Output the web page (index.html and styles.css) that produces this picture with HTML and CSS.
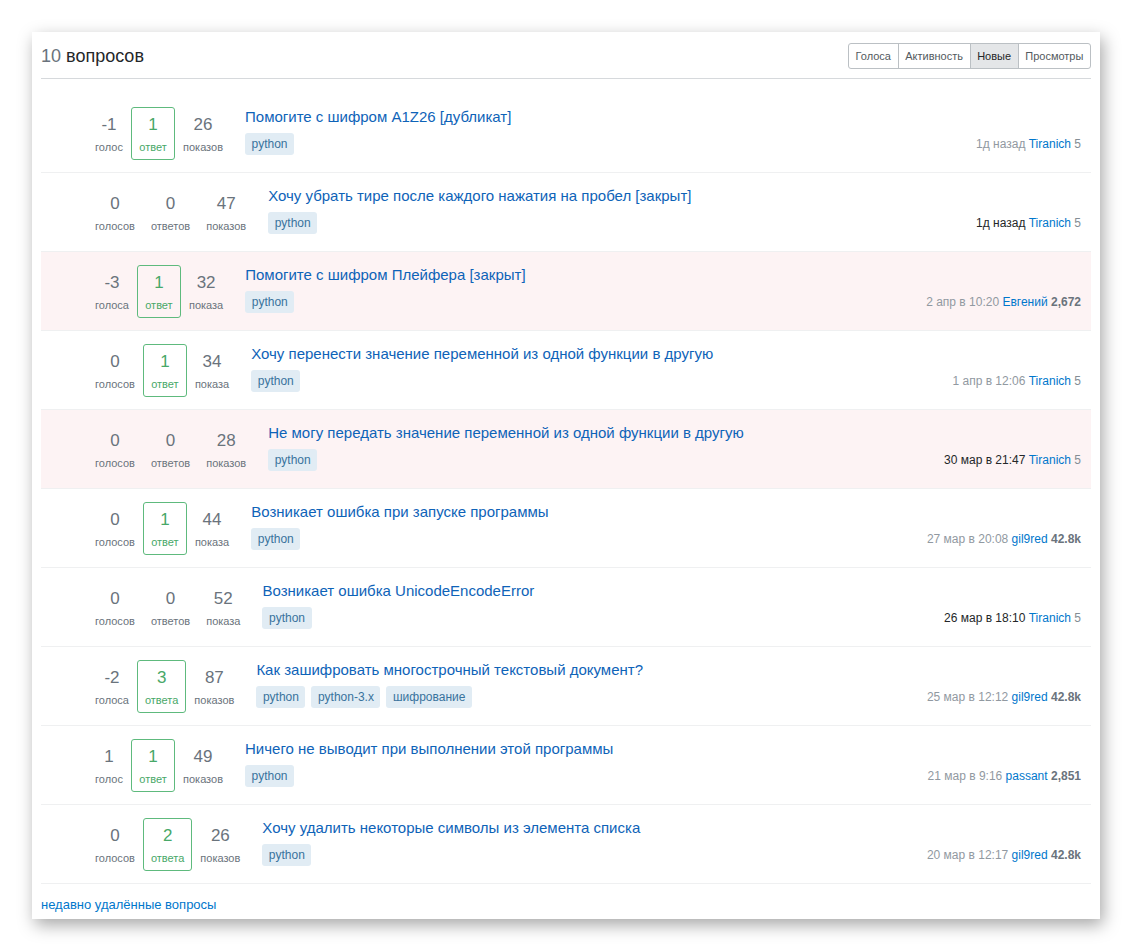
FILE: index.html
```html
<!DOCTYPE html>
<html lang="ru">
<head>
<meta charset="utf-8">
<title>10 вопросов</title>
<link rel="stylesheet" href="styles.css">
</head>
<body>
<div class="card">
  <div class="header">
    <h1 class="heading"><span class="count">10</span> вопросов</h1>
    <div class="tabs">
      <a class="tab">Голоса</a>
      <a class="tab">Активность</a>
      <a class="tab active">Новые</a>
      <a class="tab">Просмотры</a>
    </div>
  </div>

  <div class="list">
    <div class="row">
      <div class="stats">
        <div class="stat"><span class="num">-1</span><span class="lbl">голос</span></div>
        <div class="stat answered"><span class="num">1</span><span class="lbl">ответ</span></div>
        <div class="stat"><span class="num">26</span><span class="lbl">показов</span></div>
      </div>
      <div class="summary">
        <a class="title">Помогите с шифром A1Z26 [дубликат]</a>
        <div class="meta">
          <div class="tags"><a class="tag">python</a></div>
          <div class="started"><span class="when">1д назад</span> <a class="user">Tiranich</a> <span class="rep low">5</span></div>
        </div>
      </div>
    </div>

    <div class="row">
      <div class="stats">
        <div class="stat"><span class="num">0</span><span class="lbl">голосов</span></div>
        <div class="stat"><span class="num">0</span><span class="lbl">ответов</span></div>
        <div class="stat"><span class="num">47</span><span class="lbl">показов</span></div>
      </div>
      <div class="summary">
        <a class="title">Хочу убрать тире после каждого нажатия на пробел [закрыт]</a>
        <div class="meta">
          <div class="tags"><a class="tag">python</a></div>
          <div class="started"><span class="when dark">1д назад</span> <a class="user">Tiranich</a> <span class="rep low">5</span></div>
        </div>
      </div>
    </div>

    <div class="row closed">
      <div class="stats">
        <div class="stat"><span class="num">-3</span><span class="lbl">голоса</span></div>
        <div class="stat answered"><span class="num">1</span><span class="lbl">ответ</span></div>
        <div class="stat"><span class="num">32</span><span class="lbl">показа</span></div>
      </div>
      <div class="summary">
        <a class="title">Помогите с шифром Плейфера [закрыт]</a>
        <div class="meta">
          <div class="tags"><a class="tag">python</a></div>
          <div class="started"><span class="when">2 апр в 10:20</span> <a class="user">Евгений</a> <span class="rep">2,672</span></div>
        </div>
      </div>
    </div>

    <div class="row">
      <div class="stats">
        <div class="stat"><span class="num">0</span><span class="lbl">голосов</span></div>
        <div class="stat answered"><span class="num">1</span><span class="lbl">ответ</span></div>
        <div class="stat"><span class="num">34</span><span class="lbl">показа</span></div>
      </div>
      <div class="summary">
        <a class="title">Хочу перенести значение переменной из одной функции в другую</a>
        <div class="meta">
          <div class="tags"><a class="tag">python</a></div>
          <div class="started"><span class="when">1 апр в 12:06</span> <a class="user">Tiranich</a> <span class="rep low">5</span></div>
        </div>
      </div>
    </div>

    <div class="row closed">
      <div class="stats">
        <div class="stat"><span class="num">0</span><span class="lbl">голосов</span></div>
        <div class="stat"><span class="num">0</span><span class="lbl">ответов</span></div>
        <div class="stat"><span class="num">28</span><span class="lbl">показов</span></div>
      </div>
      <div class="summary">
        <a class="title">Не могу передать значение переменной из одной функции в другую</a>
        <div class="meta">
          <div class="tags"><a class="tag">python</a></div>
          <div class="started"><span class="when dark">30 мар в 21:47</span> <a class="user">Tiranich</a> <span class="rep low">5</span></div>
        </div>
      </div>
    </div>

    <div class="row">
      <div class="stats">
        <div class="stat"><span class="num">0</span><span class="lbl">голосов</span></div>
        <div class="stat answered"><span class="num">1</span><span class="lbl">ответ</span></div>
        <div class="stat"><span class="num">44</span><span class="lbl">показа</span></div>
      </div>
      <div class="summary">
        <a class="title">Возникает ошибка при запуске программы</a>
        <div class="meta">
          <div class="tags"><a class="tag">python</a></div>
          <div class="started"><span class="when">27 мар в 20:08</span> <a class="user">gil9red</a> <span class="rep">42.8k</span></div>
        </div>
      </div>
    </div>

    <div class="row">
      <div class="stats">
        <div class="stat"><span class="num">0</span><span class="lbl">голосов</span></div>
        <div class="stat"><span class="num">0</span><span class="lbl">ответов</span></div>
        <div class="stat"><span class="num">52</span><span class="lbl">показа</span></div>
      </div>
      <div class="summary">
        <a class="title">Возникает ошибка UnicodeEncodeError</a>
        <div class="meta">
          <div class="tags"><a class="tag">python</a></div>
          <div class="started"><span class="when dark">26 мар в 18:10</span> <a class="user">Tiranich</a> <span class="rep low">5</span></div>
        </div>
      </div>
    </div>

    <div class="row">
      <div class="stats">
        <div class="stat"><span class="num">-2</span><span class="lbl">голоса</span></div>
        <div class="stat answered"><span class="num">3</span><span class="lbl">ответа</span></div>
        <div class="stat"><span class="num">87</span><span class="lbl">показов</span></div>
      </div>
      <div class="summary">
        <a class="title">Как зашифровать многострочный текстовый документ?</a>
        <div class="meta">
          <div class="tags"><a class="tag">python</a><a class="tag">python-3.x</a><a class="tag">шифрование</a></div>
          <div class="started"><span class="when">25 мар в 12:12</span> <a class="user">gil9red</a> <span class="rep">42.8k</span></div>
        </div>
      </div>
    </div>

    <div class="row">
      <div class="stats">
        <div class="stat"><span class="num">1</span><span class="lbl">голос</span></div>
        <div class="stat answered"><span class="num">1</span><span class="lbl">ответ</span></div>
        <div class="stat"><span class="num">49</span><span class="lbl">показов</span></div>
      </div>
      <div class="summary">
        <a class="title">Ничего не выводит при выполнении этой программы</a>
        <div class="meta">
          <div class="tags"><a class="tag">python</a></div>
          <div class="started"><span class="when">21 мар в 9:16</span> <a class="user">passant</a> <span class="rep">2,851</span></div>
        </div>
      </div>
    </div>

    <div class="row">
      <div class="stats">
        <div class="stat"><span class="num">0</span><span class="lbl">голосов</span></div>
        <div class="stat answered"><span class="num">2</span><span class="lbl">ответа</span></div>
        <div class="stat"><span class="num">26</span><span class="lbl">показов</span></div>
      </div>
      <div class="summary">
        <a class="title">Хочу удалить некоторые символы из элемента списка</a>
        <div class="meta">
          <div class="tags"><a class="tag">python</a></div>
          <div class="started"><span class="when">20 мар в 12:17</span> <a class="user">gil9red</a> <span class="rep">42.8k</span></div>
        </div>
      </div>
    </div>
  </div>

  <div class="footer"><a class="deleted">недавно удалённые вопросы</a></div>
</div>
</body>
</html>
```

FILE: styles.css
```css
* { box-sizing: border-box; }

html, body {
  margin: 0;
  padding: 0;
  background: #ffffff;
}

body {
  padding: 32px;
  font-family: "Liberation Sans", Arial, sans-serif;
  color: #242729;
}

a { text-decoration: none; cursor: pointer; }

.card {
  width: 1068px;
  padding: 0 9px 6px;
  background: #ffffff;
  box-shadow: 3px 6px 16px rgba(0, 0, 0, 0.35);
}

.header {
  display: flex;
  justify-content: space-between;
  align-items: center;
  height: 47px;
  border-bottom: 1px solid #d6d9dc;
}

.heading {
  margin: 0;
  font-size: 18px;
  font-weight: normal;
  line-height: 24px;
  color: #242729;
  padding-top: 1px;
}

.count { color: #6a737c; }

.tabs {
  display: flex;
  margin-top: 2px;
  border: 1px solid #bbc0c4;
  border-radius: 3px;
  overflow: hidden;
  height: 26px;
}

.tab {
  display: flex;
  align-items: center;
  padding: 0 6.6px;
  font-size: 11px;
  color: #535a60;
  border-left: 1px solid #bbc0c4;
}

.tab:first-child { border-left: none; }

.tab.active {
  background: #e4e6e8;
  color: #242729;
}

.list { margin-top: 15px; }

.row {
  display: flex;
  height: 79px;
  padding: 13px 10px 0 46px;
  border-bottom: 1px solid #eff0f1;
}

.row.closed { background: #fdf3f4; }

.stats {
  display: flex;
  align-items: flex-start;
}

.stat {
  display: flex;
  flex-direction: column;
  align-items: center;
  min-width: 44px;
  height: 53px;
  padding: 6px 7px 0;
  border: 1px solid transparent;
  border-radius: 3px;
  color: #6a737c;
}

.stat .num {
  font-size: 17px;
  line-height: 22px;
}

.stat .lbl {
  margin-top: 4px;
  font-size: 11px;
  line-height: 14px;
}

.stat.answered {
  border-color: #5eba7d;
  color: #48a868;
}

.summary {
  flex: 1;
  margin-left: 14px;
}

.title {
  display: block;
  font-size: 15px;
  line-height: 20px;
  color: #0e63b8;
}

.meta {
  display: flex;
  align-items: center;
  justify-content: space-between;
  margin-top: 6px;
}

.tags { display: flex; gap: 6px; }

.tag {
  display: inline-block;
  height: 22px;
  line-height: 22px;
  padding: 0 6.5px;
  font-size: 12px;
  color: #39739d;
  background: #e1ecf4;
  border-radius: 3px;
}

.started {
  font-size: 12px;
  line-height: 16px;
  white-space: nowrap;
}

.when { color: #9199a1; }
.when.dark { color: #242729; }

.user { color: #0077cc; }

.rep {
  color: #6a737c;
  font-weight: bold;
}

.rep.low {
  color: #848d95;
  font-weight: normal;
}

.footer {
  padding-top: 11px;
  line-height: 17px;
}

.deleted {
  font-size: 13px;
  color: #0077cc;
}
```
